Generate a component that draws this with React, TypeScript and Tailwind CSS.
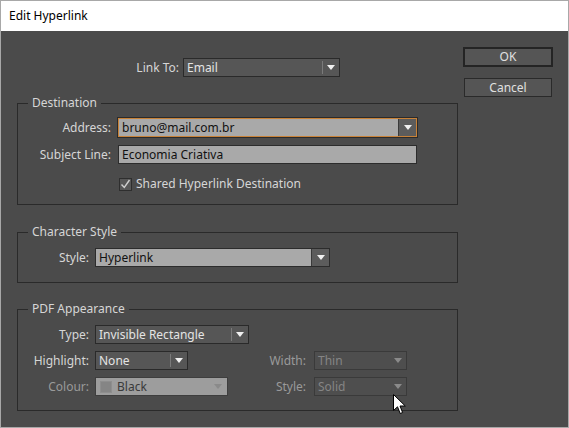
import React from 'react';

const font = { fontFamily: '"Noto Sans", "Open Sans", sans-serif' };

// small downward triangle used on every dropdown
const Arrow = ({ dim = false }: { dim?: boolean }) => (
  <svg width="8" height="5" viewBox="0 0 8 5">
    <path d="M0 0h8L4 5z" fill={dim ? '#8a8a8a' : '#f0f0f0'} />
  </svg>
);

interface SelectProps {
  value: string;
  width: string;
  variant?: 'dark' | 'light' | 'disabled' | 'disabledLight';
  focused?: boolean;
  swatch?: boolean;
}

const Select: React.FC<SelectProps> = ({ value, width, variant = 'dark', focused = false, swatch = false }) => {
  if (variant === 'light') {
    return (
      <div
        className={`${width} h-[19px] flex items-stretch ${
          focused ? 'border border-[#c98237] outline outline-1 outline-[#2b2b2b]' : 'border border-[#2c2c2c]'
        }`}
      >
        <div className="flex-1 bg-[#a9a9a9] text-[#111] text-[12px] leading-[17px] pl-[3px]">{value}</div>
        <div className="w-[18px] bg-[#5c5c5c] border-l border-[#3a3a3a] flex items-center justify-center">
          <Arrow />
        </div>
      </div>
    );
  }
  if (variant === 'disabledLight') {
    return (
      <div className={`${width} h-[19px] flex items-stretch border border-[#3e3e3e] bg-[#9d9d9d]`}>
        <div className="flex-1 flex items-center gap-[5px] pl-[4px] text-[#3a3a3a] text-[12px]">
          {swatch && <span className="w-[12px] h-[12px] bg-[#858585] border border-[#8e8e8e]" />}
          {value}
        </div>
        <div className="w-[18px] flex items-center justify-center">
          <Arrow dim />
        </div>
      </div>
    );
  }
  const disabled = variant === 'disabled';
  return (
    <div
      className={`${width} h-[19px] flex items-stretch border ${
        disabled ? 'border-[#3a3a3a] bg-[#4e4e4e]' : 'border-[#2a2a2a] bg-[#565656]'
      }`}
    >
      <div className={`flex-1 text-[12px] leading-[17px] pl-[3px] ${disabled ? 'text-[#858585]' : 'text-[#e4e4e4]'}`}>
        {value}
      </div>
      {!disabled && <div className="w-px my-[2px] bg-[#2f2f2f] border-r border-[#7a7a7a]" />}
      <div className="w-[16px] flex items-center justify-center">
        <Arrow dim={disabled} />
      </div>
    </div>
  );
};

const Group = ({ title, className, children }: { title: string; className: string; children: React.ReactNode }) => (
  <div className={`relative border border-[#2a2a2a] ${className}`}>
    <span className="absolute left-[10px] -top-[10px] px-[4px] bg-[#4b4b4b] text-[#d6d6d6] text-[12px] leading-[18px]">
      {title}
    </span>
    {children}
  </div>
);

const Label = ({ text, width, dim = false }: { text: string; width: string; dim?: boolean }) => (
  <span className={`${width} text-right text-[12px] ${dim ? 'text-[#9a9a9a]' : 'text-[#d6d6d6]'}`}>{text}</span>
);

const Cursor = () => (
  <svg className="absolute left-[392px] top-[393px]" width="13" height="21" viewBox="0 0 13 21">
    <path d="M0.5 0.5V16.5L4.5 12.8L7.2 19.5L9.6 18.5L7 12H12.3Z" fill="#fff" stroke="#000" strokeWidth="1" />
  </svg>
);

export default function App() {
  return (
    <div className="relative w-[569px] h-[428px] bg-[#4b4b4b] border border-[#a8a8a8] overflow-hidden" style={font}>
      {/* title bar */}
      <div className="h-[30px] bg-white flex items-center pl-[8px] text-[12px] text-black">Edit Hyperlink</div>

      <div className="flex">
        {/* left column */}
        <div className="pl-[16px] w-[457px]">
          <div className="h-[27px]" />
          <div className="flex items-center h-[19px]">
            <span className="w-[162px] text-right text-[12px] text-[#d6d6d6]">Link To:</span>
            <div className="ml-[4px]">
              <Select value="Email" width="w-[157px]" />
            </div>
          </div>

          <Group title="Destination" className="mt-[26px] h-[102px] w-[441px]">
            <div className="pt-[14px] flex flex-col gap-[8px]">
              <div className="flex items-center gap-[7px]">
                <Label text="Address:" width="w-[93px]" />
                <Select value="bruno@mail.com.br" width="w-[299px]" variant="light" focused />
              </div>
              <div className="flex items-center gap-[7px]">
                <Label text="Subject Line:" width="w-[93px]" />
                <div className="w-[299px] h-[19px] border border-[#2c2c2c] bg-[#a9a9a9] text-[#111] text-[12px] leading-[17px] pl-[3px]">
                  Economia Criativa
                </div>
              </div>
              <div className="flex items-center gap-[4px] pl-[101px] mt-[3px]">
                <span className="w-[13px] h-[13px] border border-[#2e2e2e] bg-[#575757] flex items-center justify-center">
                  <svg width="11" height="11" viewBox="0 0 11 11">
                    <path d="M1.5 5.5L4.3 8.5L9.5 1" fill="none" stroke="#cfcfcf" strokeWidth="1.4" />
                  </svg>
                </span>
                <span className="text-[12px] text-[#d6d6d6]">Shared Hyperlink Destination</span>
              </div>
            </div>
          </Group>

          <Group title="Character Style" className="mt-[27px] h-[51px] w-[441px]">
            <div className="pt-[15px] flex items-center gap-[6px]">
              <Label text="Style:" width="w-[71px]" />
              <Select value="Hyperlink" width="w-[235px]" variant="light" />
            </div>
          </Group>

          <Group title="PDF Appearance" className="mt-[26px] h-[102px] w-[441px]">
            <div className="pt-[15px] flex flex-col gap-[7px]">
              <div className="flex items-center gap-[6px]">
                <Label text="Type:" width="w-[71px]" />
                <Select value="Invisible Rectangle" width="w-[154px]" />
              </div>
              <div className="flex items-center gap-[6px]">
                <Label text="Highlight:" width="w-[71px]" />
                <Select value="None" width="w-[93px]" />
                <Label text="Width:" width="w-[112px]" dim />
                <div className="ml-[2px]">
                  <Select value="Thin" width="w-[93px]" variant="disabled" />
                </div>
              </div>
              <div className="flex items-center gap-[6px]">
                <Label text="Colour:" width="w-[71px]" dim />
                <Select value="Black" width="w-[133px]" variant="disabledLight" swatch />
                <Label text="Style:" width="w-[72px]" dim />
                <div className="ml-[2px]">
                  <Select value="Solid" width="w-[93px]" variant="disabled" />
                </div>
              </div>
            </div>
          </Group>
        </div>

        {/* buttons */}
        <div className="ml-[5px] pt-[16px] flex flex-col items-start">
          <button className="w-[90px] h-[20px] border-2 border-[#242424] bg-[#555555] text-[12px] text-[#e0e0e0] leading-[14px]">
            OK
          </button>
          <button className="mt-[11px] ml-[1px] w-[88px] h-[19px] border border-[#2a2a2a] bg-[#555555] text-[12px] text-[#e0e0e0] leading-[15px]">
            Cancel
          </button>
        </div>
      </div>

      <Cursor />
    </div>
  );
}
